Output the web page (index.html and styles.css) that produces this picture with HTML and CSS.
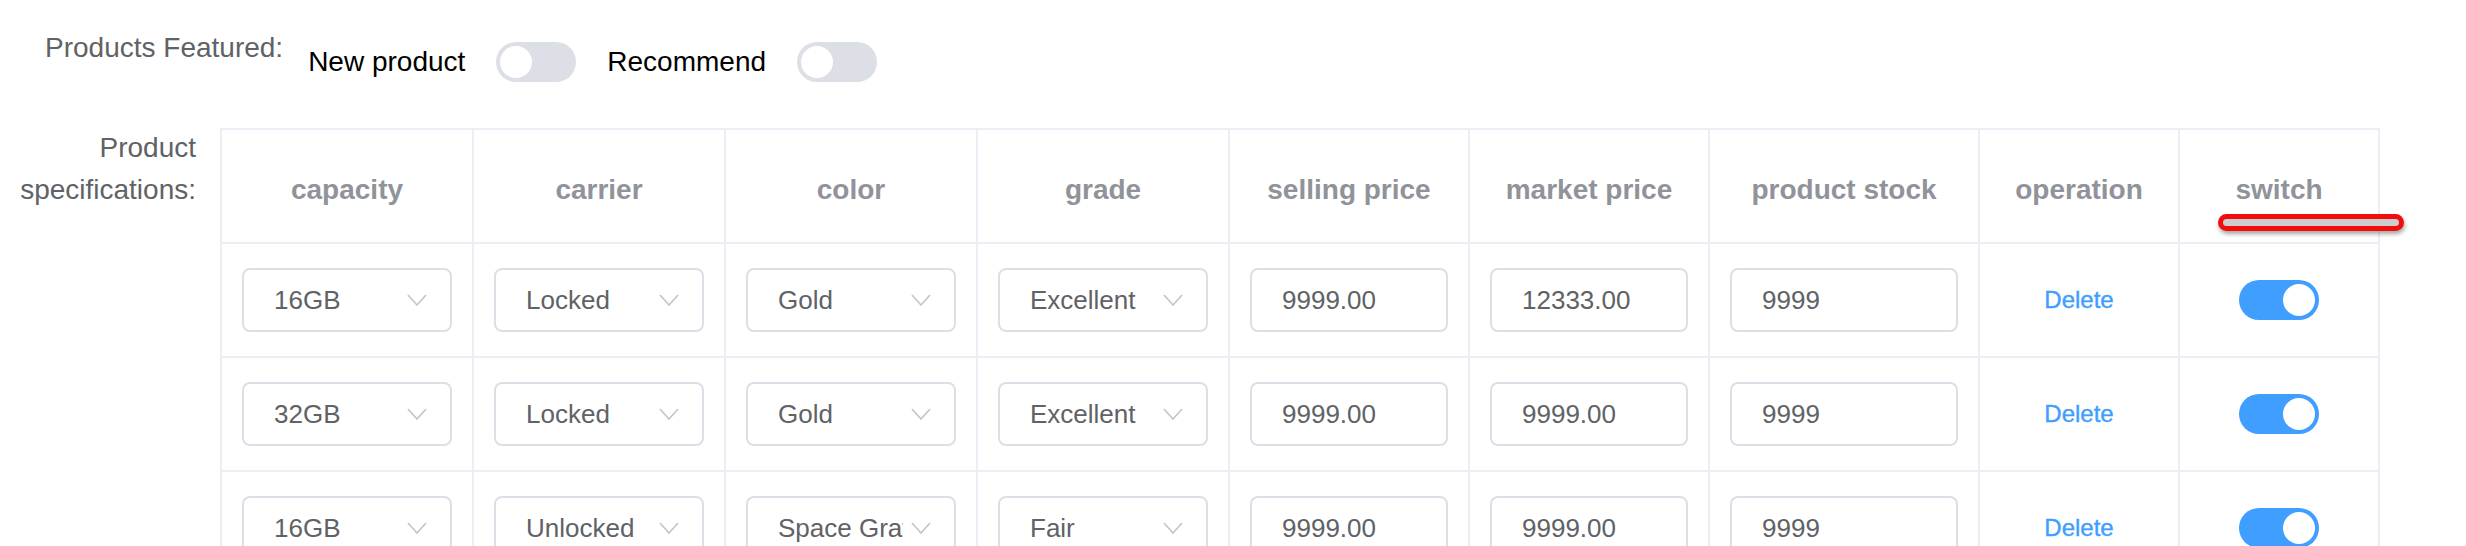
FILE: index.html
```html
<!DOCTYPE html>
<html lang="en">
<head>
<meta charset="utf-8">
<title>Product form</title>
<link rel="stylesheet" href="styles.css">
</head>
<body>
<div class="page">
  <div class="form-row featured">
    <div class="featured-label">Products Featured:</div>
    <div class="featured-controls">
      <span class="opt">New product</span>
      <span class="switch"><span class="knob"></span></span>
      <span class="opt">Recommend</span>
      <span class="switch"><span class="knob"></span></span>
    </div>
  </div>

  <div class="form-row specs">
    <div class="spec-label">Product specifications:</div>
    <div class="spec-table">
      <div class="cell th">capacity</div>
      <div class="cell th">carrier</div>
      <div class="cell th">color</div>
      <div class="cell th">grade</div>
      <div class="cell th">selling price</div>
      <div class="cell th">market price</div>
      <div class="cell th">product stock</div>
      <div class="cell th">operation</div>
      <div class="cell th th-switch">switch<span class="annotation"></span></div>

      <div class="cell"><div class="select"><span class="value">16GB</span><svg class="arrow" width="20" height="12" viewBox="0 0 20 12"><polyline points="1,1 10,11 19,1"/></svg></div></div>
      <div class="cell"><div class="select"><span class="value">Locked</span><svg class="arrow" width="20" height="12" viewBox="0 0 20 12"><polyline points="1,1 10,11 19,1"/></svg></div></div>
      <div class="cell"><div class="select"><span class="value">Gold</span><svg class="arrow" width="20" height="12" viewBox="0 0 20 12"><polyline points="1,1 10,11 19,1"/></svg></div></div>
      <div class="cell"><div class="select"><span class="value">Excellent</span><svg class="arrow" width="20" height="12" viewBox="0 0 20 12"><polyline points="1,1 10,11 19,1"/></svg></div></div>
      <div class="cell"><input class="num" type="text" value="9999.00"></div>
      <div class="cell"><input class="num" type="text" value="12333.00"></div>
      <div class="cell"><input class="num" type="text" value="9999"></div>
      <div class="cell"><span class="link">Delete</span></div>
      <div class="cell"><span class="switch on"><span class="knob"></span></span></div>

      <div class="cell"><div class="select"><span class="value">32GB</span><svg class="arrow" width="20" height="12" viewBox="0 0 20 12"><polyline points="1,1 10,11 19,1"/></svg></div></div>
      <div class="cell"><div class="select"><span class="value">Locked</span><svg class="arrow" width="20" height="12" viewBox="0 0 20 12"><polyline points="1,1 10,11 19,1"/></svg></div></div>
      <div class="cell"><div class="select"><span class="value">Gold</span><svg class="arrow" width="20" height="12" viewBox="0 0 20 12"><polyline points="1,1 10,11 19,1"/></svg></div></div>
      <div class="cell"><div class="select"><span class="value">Excellent</span><svg class="arrow" width="20" height="12" viewBox="0 0 20 12"><polyline points="1,1 10,11 19,1"/></svg></div></div>
      <div class="cell"><input class="num" type="text" value="9999.00"></div>
      <div class="cell"><input class="num" type="text" value="9999.00"></div>
      <div class="cell"><input class="num" type="text" value="9999"></div>
      <div class="cell"><span class="link">Delete</span></div>
      <div class="cell"><span class="switch on"><span class="knob"></span></span></div>

      <div class="cell"><div class="select"><span class="value">16GB</span><svg class="arrow" width="20" height="12" viewBox="0 0 20 12"><polyline points="1,1 10,11 19,1"/></svg></div></div>
      <div class="cell"><div class="select"><span class="value">Unlocked</span><svg class="arrow" width="20" height="12" viewBox="0 0 20 12"><polyline points="1,1 10,11 19,1"/></svg></div></div>
      <div class="cell"><div class="select"><span class="value">Space Gray</span><svg class="arrow" width="20" height="12" viewBox="0 0 20 12"><polyline points="1,1 10,11 19,1"/></svg></div></div>
      <div class="cell"><div class="select"><span class="value">Fair</span><svg class="arrow" width="20" height="12" viewBox="0 0 20 12"><polyline points="1,1 10,11 19,1"/></svg></div></div>
      <div class="cell"><input class="num" type="text" value="9999.00"></div>
      <div class="cell"><input class="num" type="text" value="9999.00"></div>
      <div class="cell"><input class="num" type="text" value="9999"></div>
      <div class="cell"><span class="link">Delete</span></div>
      <div class="cell"><span class="switch on"><span class="knob"></span></span></div>
    </div>
  </div>
</div>
</body>
</html>
```

FILE: styles.css
```css
* { box-sizing: border-box; }

html, body {
  margin: 0;
  padding: 0;
  background: #ffffff;
}

body {
  width: 2466px;
  height: 546px;
  overflow: hidden;
  font-family: "Liberation Sans", Arial, Helvetica, sans-serif;
  font-size: 28px;
  color: #606266;
}

.page {
  display: flex;
  flex-direction: column;
}

.form-row {
  display: flex;
  align-items: flex-start;
}

/* ---------- featured row ---------- */
.featured {
  padding-top: 28px;
  padding-left: 45px;
}

.featured-label {
  line-height: 40px;
  color: #606266;
  margin-right: 25px;
}

.featured-controls {
  margin-top: 14px;
  display: flex;
  align-items: center;
  gap: 31px;
  height: 40px;
}

.opt {
  color: #000000;
  line-height: 40px;
}

/* ---------- switch ---------- */
.switch {
  display: block;
  position: relative;
  width: 80px;
  height: 40px;
  border-radius: 20px;
  background: #dcdfe6;
  flex: none;
}

.switch .knob {
  position: absolute;
  top: 4px;
  left: 4px;
  width: 32px;
  height: 32px;
  border-radius: 50%;
  background: #ffffff;
}

.switch.on {
  background: #409eff;
}

.switch.on .knob {
  left: 44px;
}

/* ---------- specs row ---------- */
.specs {
  margin-top: 46px;
}

.spec-label {
  width: 220px;
  padding-right: 24px;
  text-align: right;
  line-height: 42px;
  color: #606266;
  margin-top: -1px;
}

.spec-table {
  display: grid;
  grid-template-columns: 252px 252px 252px 252px 240px 240px 270px 200px 200px;
  border-left: 2px solid #ebeef5;
  border-top: 2px solid #ebeef5;
  background: #ffffff;
}

.cell {
  height: 114px;
  padding: 0 20px;
  display: flex;
  align-items: center;
  justify-content: center;
  border-right: 2px solid #ebeef5;
  border-bottom: 2px solid #ebeef5;
}

.th {
  font-weight: bold;
  color: #909399;
  padding-top: 8px;
  white-space: nowrap;
}

.th-switch {
  position: relative;
}

/* red annotation drawn over the header */
.annotation {
  position: absolute;
  left: 38px;
  top: 84px;
  width: 186px;
  height: 17px;
  border: 5px solid #f20d0d;
  border-radius: 9px;
  background: #cdcdcd;
  box-shadow: 1px 3px 4px rgba(0, 0, 0, 0.35);
}

/* ---------- select ---------- */
.select {
  width: 100%;
  height: 64px;
  display: flex;
  align-items: center;
  border: 2px solid #dcdfe6;
  border-radius: 8px;
  padding-left: 30px;
  padding-right: 23px;
  background: #ffffff;
  font-size: 26px;
  color: #606266;
}

.select .value {
  flex: 1;
  min-width: 0;
  overflow: hidden;
  white-space: nowrap;
}

.select .arrow {
  flex: none;
  margin-left: 8px;
}

.arrow polyline {
  fill: none;
  stroke: #c0c4cc;
  stroke-width: 1.6;
}

/* ---------- inputs ---------- */
.num {
  width: 100%;
  height: 64px;
  border: 2px solid #dcdfe6;
  border-radius: 8px;
  padding: 0 30px;
  margin: 0;
  background: #ffffff;
  font-family: "Liberation Sans", Arial, Helvetica, sans-serif;
  font-size: 26px;
  color: #606266;
  outline: none;
}

.link {
  color: #409eff;
  font-size: 24px;
  -webkit-text-stroke: 0.4px #409eff;
}
```
